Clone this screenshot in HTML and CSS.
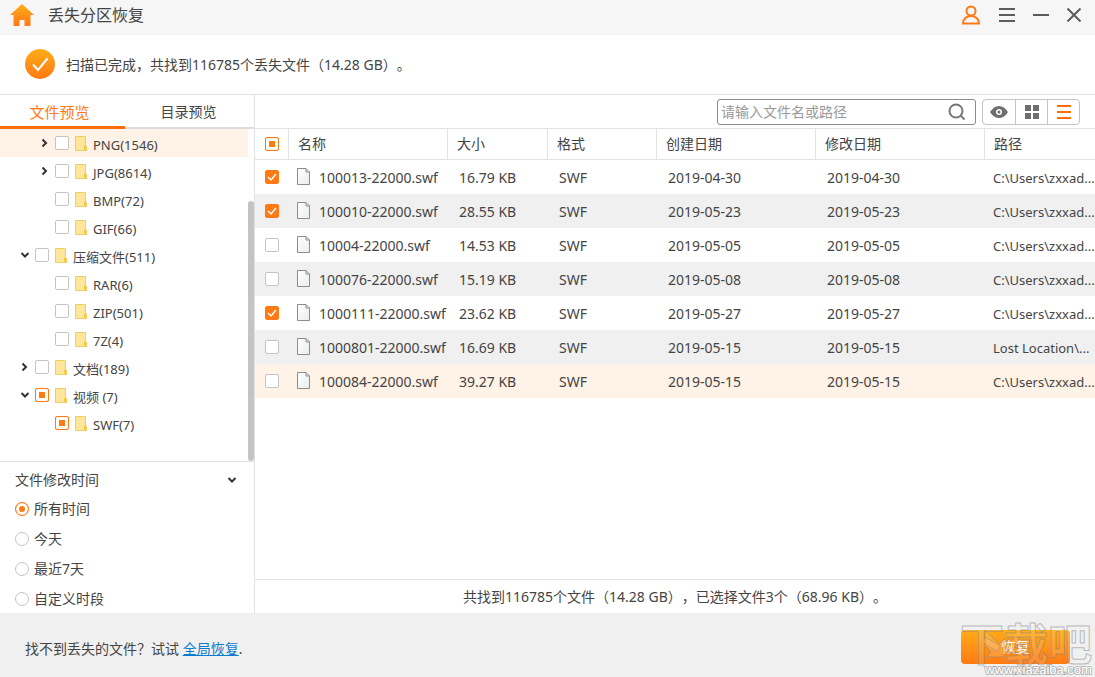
FILE: index.html
```html
<!DOCTYPE html>
<html lang="zh-CN">
<head>
    <meta charset="UTF-8">
    <meta name="viewport" content="width=device-width, initial-scale=1.0">
    <title>丢失分区恢复</title>
    <link rel="stylesheet" href="styles.css">
</head>
<body>
    <!-- shared icons -->
    <svg class="sprite" aria-hidden="true">
        <defs>
            <linearGradient id="orange" x1="0" y1="0" x2="0" y2="1">
                <stop offset="0" stop-color="#ffac18"/>
                <stop offset="1" stop-color="#ff7a14"/>
            </linearGradient>
            <linearGradient id="paper" x1="0" y1="0" x2="1" y2="1">
                <stop offset="0" stop-color="#ffffff"/>
                <stop offset="1" stop-color="#e9eeee"/>
            </linearGradient>
        </defs>
        <symbol id="folder" viewBox="0 0 12 15">
            <path d="M0.5 0.5h10v9l1 1v4H0.5z" fill="#ffe69a" stroke="#f0cf62"/>
            <path d="M9 9.5h2.5v5H9z" fill="#f3cb4c"/>
        </symbol>
        <symbol id="file" viewBox="0 0 13 17">
            <path d="M0.5 0.5h8.5l3.5 3.5v12.5H0.5z" fill="url(#paper)" stroke="#8c8c8c"/>
            <path d="M9 0.5V4h3.5" fill="none" stroke="#8c8c8c"/>
        </symbol>
        <symbol id="right" viewBox="0 0 8 10">
            <path d="M1.5 1.5l3.5 3.5-3.5 3.5" fill="none" stroke="#333" stroke-width="2"/>
        </symbol>
        <symbol id="down" viewBox="0 0 10 8">
            <path d="M1.5 2l3.5 3.5 3.5-3.5" fill="none" stroke="#333" stroke-width="2"/>
        </symbol>
    </svg>

    <div class="app">
        <header class="titlebar">
            <svg class="home" viewBox="0 0 24 22"><path d="M12 0L0 11h3.5v10q0 1 1 1h5v-6h5v6h5q1 0 1-1V11H24z" fill="url(#orange)"/></svg>
            <h1>丢失分区恢复</h1>
            <div class="window-buttons">
                <button type="button" aria-label="账户">
                    <svg width="20" height="20" viewBox="0 0 20 20" fill="none" stroke="#ff7a14" stroke-width="2"><circle cx="10" cy="6" r="4.5"/><path d="M2 18.500c0-4.500 3.500-7.500 8-7.500s8 3 8 7.500z"/></svg>
                </button>
                <button type="button" aria-label="菜单">
                    <svg width="16" height="14" viewBox="0 0 16 14" stroke="#5c5c5c" stroke-width="2"><path d="M0 1h16M0 7h16M0 13h16"/></svg>
                </button>
                <button type="button" aria-label="最小化">
                    <svg width="16" height="14" viewBox="0 0 16 14" stroke="#5c5c5c" stroke-width="2"><path d="M0 7h16"/></svg>
                </button>
                <button type="button" aria-label="关闭">
                    <svg width="14" height="14" viewBox="0 0 14 14" stroke="#5c5c5c" stroke-width="2"><path d="M0.5 0.5l13 13M13.5 0.5l-13 13"/></svg>
                </button>
            </div>
        </header>

        <div class="status">
            <svg width="30" height="30" viewBox="0 0 30 30"><circle cx="15" cy="15" r="15" fill="url(#orange)"/><path d="M8 15.5l5 5.5 9.5-11.5" fill="none" stroke="#fff" stroke-width="2"/></svg>
            <p>扫描已完成，共找到116785个丢失文件（14.28 GB）。</p>
        </div>

        <main class="main">
            <aside class="sidebar">
                <div class="tabs">
                    <button type="button" class="tab active">文件预览</button>
                    <button type="button" class="tab">目录预览</button>
                </div>
                <div class="tree-wrap">
                    <ul class="tree" id="tree"></ul>
                    <div class="scrollbar"></div>
                </div>
                <fieldset class="filter" aria-labelledby="filter-title">
                    <div class="filter-head"><span id="filter-title">文件修改时间</span><svg width="10" height="8"><use href="#down"/></svg></div>
                    <label><input type="radio" name="time" checked>所有时间</label>
                    <label><input type="radio" name="time">今天</label>
                    <label><input type="radio" name="time">最近7天</label>
                    <label><input type="radio" name="time">自定义时段</label>
                </fieldset>
            </aside>

            <section class="content">
                <div class="toolbar">
                    <div class="search">
                        <input type="text" placeholder="请输入文件名或路径" aria-label="请输入文件名或路径">
                        <button type="button" aria-label="搜索">
                            <svg width="18" height="18" viewBox="0 0 18 18" fill="none" stroke="#777" stroke-width="2"><circle cx="8" cy="8" r="6.5"/><path d="M12.5 12.5l4 4"/></svg>
                        </button>
                    </div>
                    <div class="views">
                        <button type="button" aria-label="预览">
                            <svg width="18" height="12" viewBox="0 0 18 12"><path d="M0 6c5-8 13-8 18 0-5 8-13 8-18 0z" fill="#6e6e6e"/><circle cx="9" cy="6" r="3" fill="#fff"/><circle cx="9" cy="6" r="1.5" fill="#6e6e6e"/></svg>
                        </button>
                        <button type="button" aria-label="网格">
                            <svg width="14" height="14" viewBox="0 0 14 14" fill="#6e6e6e"><path d="M0 0h6v6H0zM8 0h6v6H8zM0 8h6v6H0zM8 8h6v6H8z"/></svg>
                        </button>
                        <button type="button" aria-label="列表">
                            <svg width="14" height="14" viewBox="0 0 14 14" stroke="#ff6d0a" stroke-width="2"><path d="M0 1h14M0 7h14M0 13h14"/></svg>
                        </button>
                    </div>
                </div>

                <div class="table-wrap">
                    <table class="files">
                        <colgroup>
                            <col class="c-check"><col class="c-name"><col class="c-size"><col class="c-type"><col class="c-date"><col class="c-mod"><col>
                        </colgroup>
                        <thead>
                            <tr>
                                <th><input type="checkbox" class="partial" aria-label="全选"></th>
                                <th>名称</th>
                                <th>大小</th>
                                <th>格式</th>
                                <th>创建日期</th>
                                <th>修改日期</th>
                                <th>路径</th>
                            </tr>
                        </thead>
                        <tbody id="rows"></tbody>
                    </table>
                </div>

                <p class="summary">共找到116785个文件（14.28 GB），已选择文件3个（68.96 KB）。</p>
            </section>
        </main>

        <footer class="footer">
            <p>找不到丢失的文件？试试 <a href="#">全局恢复</a>.</p>
            <div class="recover-box">
                <button type="button" class="recover">恢复</button>
                <svg class="mark" viewBox="0 0 136 57" aria-hidden="true">
                    <text x="0" y="41" class="mark-name">下载吧</text>
                    <path d="M25 10l14 14 5-5v18H26l5-5-6-7z" class="mark-arrow"/>
                    <text x="25" y="54" class="mark-url">www.xiazaiba.com</text>
                </svg>
            </div>
        </footer>
    </div>

    <script>
        const tree = [
            { name: 'PNG(1546)', level: 2, arrow: 'right', current: true },
            { name: 'JPG(8614)', level: 2, arrow: 'right' },
            { name: 'BMP(72)', level: 2 },
            { name: 'GIF(66)', level: 2 },
            { name: '压缩文件(511)', level: 1, arrow: 'down' },
            { name: 'RAR(6)', level: 2 },
            { name: 'ZIP(501)', level: 2 },
            { name: '7Z(4)', level: 2 },
            { name: '文档(189)', level: 1, arrow: 'right' },
            { name: '视频 (7)', level: 1, arrow: 'down', partial: true },
            { name: 'SWF(7)', level: 2, partial: true }
        ];

        const files = [
            ['100013-22000.swf', '16.79 KB', '2019-04-30', 'C:\\Users\\zxxad...', true],
            ['100010-22000.swf', '28.55 KB', '2019-05-23', 'C:\\Users\\zxxad...', true],
            ['10004-22000.swf', '14.53 KB', '2019-05-05', 'C:\\Users\\zxxad...', false],
            ['100076-22000.swf', '15.19 KB', '2019-05-08', 'C:\\Users\\zxxad...', false],
            ['1000111-22000.swf', '23.62 KB', '2019-05-27', 'C:\\Users\\zxxad...', true],
            ['1000801-22000.swf', '16.69 KB', '2019-05-15', 'Lost Location\\...', false],
            ['100084-22000.swf', '39.27 KB', '2019-05-15', 'C:\\Users\\zxxad...', false]
        ];

        document.getElementById('tree').innerHTML = tree.map(n => `
            <li class="level-${n.level} ${n.current ? 'current' : ''}">
                <span class="arrow">${n.arrow ? `<svg class="${n.arrow}"><use href="#${n.arrow}"/></svg>` : ''}</span>
                <label><input type="checkbox" class="${n.partial ? 'partial' : ''}"><svg class="folder"><use href="#folder"/></svg><span>${n.name}</span></label>
            </li>
        `).join('');

        document.getElementById('rows').innerHTML = files.map(([name, size, date, path, checked], i) => `
            <tr class="${i === files.length - 1 ? 'current' : ''}">
                <td><input type="checkbox" aria-label="${name}" ${checked ? 'checked' : ''}></td>
                <td><span class="file-name"><svg class="file"><use href="#file"/></svg>${name}</span></td>
                <td>${size}</td>
                <td>SWF</td>
                <td>${date}</td>
                <td>${date}</td>
                <td>${path}</td>
            </tr>
        `).join('');
    </script>
</body>
</html>
```
FILE: styles.css
```css
:root {
    --orange: #ff7a14;
    --line: #e2e2e2;
    --text: #444;
    --hover: #fff2e6;
}

* {
    box-sizing: border-box;
    margin: 0;
    padding: 0;
}

body {
    font-family: "Noto Sans", "Noto Sans CJK SC", sans-serif;
    font-size: 14px;
    line-height: 20px;
    text-spacing-trim: space-all;
    color: var(--text);
    background: #fff;
}

button {
    border: 0;
    background: none;
    font: inherit;
    color: inherit;
    cursor: pointer;
}

button svg {
    display: block;
}

.sprite {
    position: absolute;
    width: 0;
    height: 0;
}

.app {
    display: flex;
    flex-direction: column;
    min-height: 100vh;
}

/* title bar */
.titlebar {
    display: flex;
    align-items: center;
    height: 35px;
    padding: 0 14px 5px 10px;
    background: #f6f6f6;
}

.home {
    width: 24px;
    height: 22px;
}

.titlebar h1 {
    margin-left: 14px;
    font-size: 16px;
    font-weight: 400;
}

.window-buttons {
    display: flex;
    align-items: center;
    gap: 18px;
    margin-left: auto;
}

.status {
    display: flex;
    align-items: center;
    gap: 11px;
    height: 60px;
    padding: 0 25px 2px;
    border-bottom: 1px solid var(--line);
}

.status p {
    padding-top: 2px;
}

/* check boxes and radios */
input[type="checkbox"],
input[type="radio"] {
    appearance: none;
    flex: none;
    display: block;
    width: 14px;
    height: 14px;
    border: 1px solid #c4c4c4;
    border-radius: 2px;
    background: #fff center / 14px 14px no-repeat;
}

input[type="radio"] {
    border-radius: 50%;
}

input[type="checkbox"]:checked {
    border-color: var(--orange);
    background-color: var(--orange);
    background-image: url("data:image/svg+xml,%3Csvg xmlns='http://www.w3.org/2000/svg' viewBox='0 0 14 14'%3E%3Cpath d='M3 7l3 3 5-6' fill='none' stroke='white' stroke-width='1.5'/%3E%3C/svg%3E");
}

input[type="radio"]:checked,
input.partial {
    border-color: var(--orange);
    background: var(--orange);
    box-shadow: inset 0 0 0 3px #fff;
}

/* sidebar */
.main {
    flex: 1;
    display: flex;
}

.sidebar {
    flex: none;
    display: flex;
    flex-direction: column;
    width: 255px;
    border-right: 1px solid var(--line);
}

.tabs {
    display: flex;
    height: 34px;
}

.tab {
    flex: 1;
    padding: 2px 2px 0 0;
    border-bottom: 2px solid #dcdcdc;
}

.tab.active {
    flex: none;
    width: 125px;
    padding-right: 6px;
    border-bottom: 3px solid #ff6d0a;
    font-size: 15px;
    color: var(--orange);
}

.tree-wrap {
    flex: 1;
    display: flex;
    justify-content: space-between;
}

.tree {
    flex: 1;
    list-style: none;
    font-size: 13px;
}

.tree li {
    display: flex;
    align-items: center;
    height: 28px;
}

.tree li.current {
    background: var(--hover);
}

.tree .level-1 {
    padding-left: 20px;
}

.tree .level-2 {
    padding-left: 40px;
}

.tree label {
    display: flex;
    align-items: center;
}

.tree label span {
    margin-left: 6px;
    padding-top: 4px;
}

.arrow {
    width: 15px;
}

.right,
.down {
    display: block;
    width: 10px;
    height: 8px;
}

.right {
    height: 10px;
}

.folder {
    width: 12px;
    height: 15px;
    margin-left: 6px;
}

.scrollbar {
    width: 6px;
    margin-top: 72px;
    border-radius: 3px;
    background: #c4c4c4;
}

.filter {
    padding: 3px 15px 0;
    border: 0;
    border-top: 1px solid var(--line);
}

.filter-head,
.filter label {
    display: flex;
    align-items: center;
    gap: 5px;
    height: 30px;
    padding-top: 2px;
}

.filter-head {
    justify-content: space-between;
    height: 28px;
    padding-right: 2px;
}

/* right side */
.content {
    flex: 1;
    min-width: 0;
    display: flex;
    flex-direction: column;
}

.toolbar {
    display: flex;
    justify-content: flex-end;
    align-items: center;
    gap: 6px;
    height: 34px;
    padding-right: 15px;
    border-bottom: 1px solid var(--line);
}

.search {
    display: flex;
    align-items: center;
    width: 259px;
    height: 26px;
    border: 1px solid #8c8c8c;
    border-radius: 3px;
}

.search input {
    flex: 1;
    min-width: 0;
    padding-left: 3px;
    border: 0;
    outline: 0;
    font: inherit;
    background: none;
}

.search input::placeholder {
    color: #999;
}

.search button {
    padding-right: 9px;
}

.views {
    display: flex;
    height: 26px;
    border: 1px solid #c4c4c4;
    border-radius: 4px;
}

.views button {
    display: grid;
    place-items: center;
    width: 32px;
}

.views button + button {
    border-left: 1px solid #c4c4c4;
}

.table-wrap {
    flex: 1;
}

.files {
    width: 100%;
    table-layout: fixed;
    border-collapse: separate;
    border-spacing: 0;
}

.c-check { width: 34px; }
.c-name { width: 159px; }
.c-size { width: 100px; }
.c-type { width: 109px; }
.c-date { width: 159px; }
.c-mod { width: 169px; }

.files th {
    height: 31px;
    padding-left: 9px;
    border-right: 1px solid var(--line);
    border-bottom: 1px solid var(--line);
    font-weight: 400;
    text-align: left;
}

.files th:last-child {
    border-right: 0;
}

.files td {
    height: 34px;
    padding-top: 2px;
    padding-left: 11px;
    white-space: nowrap;
}

.files td:nth-child(2) {
    padding-left: 8px;
}

.files td:last-child {
    padding-left: 8px;
    font-size: 13px;
}

.files th:first-child,
.files td:first-child {
    padding-top: 0;
    padding-left: 10px;
}

.files tr:nth-child(even) td {
    background: #f0f0f0;
}

.files tr.current td {
    background: var(--hover);
}

.file-name {
    display: flex;
    align-items: center;
    gap: 9px;
}

.file {
    width: 13px;
    height: 17px;
    margin-bottom: 3px;
}

.summary {
    padding: 7px 0 6px;
    border-top: 1px solid var(--line);
    text-align: center;
}

/* bottom bar */
.footer {
    display: flex;
    justify-content: space-between;
    align-items: center;
    height: 64px;
    padding: 0 25px;
    background: #f0f0f0;
}

.footer p {
    padding-top: 8px;
}

.footer a {
    color: #0b7bd0;
}

.recover-box {
    position: relative;
    padding-top: 4px;
}

.recover {
    display: block;
    width: 109px;
    height: 34px;
    border-radius: 4px;
    background: linear-gradient(#ffac18, #ff7a14);
    color: #fff;
}

.mark {
    position: absolute;
    top: -6px;
    left: -1px;
    width: 136px;
    height: 57px;
    pointer-events: none;
}

.mark-name,
.mark-arrow {
    fill: rgba(255, 255, 255, 0.15);
    stroke: rgba(130, 130, 130, 0.5);
    stroke-width: 1;
}

.mark-name {
    font-family: "Noto Sans CJK SC", sans-serif;
    font-size: 44px;
    font-weight: 700;
}

.mark-url {
    font-family: "Liberation Sans", sans-serif;
    font-size: 13px;
    fill: #fff;
    stroke: rgba(130, 130, 130, 0.5);
    stroke-width: 2;
    paint-order: stroke;
}
```
